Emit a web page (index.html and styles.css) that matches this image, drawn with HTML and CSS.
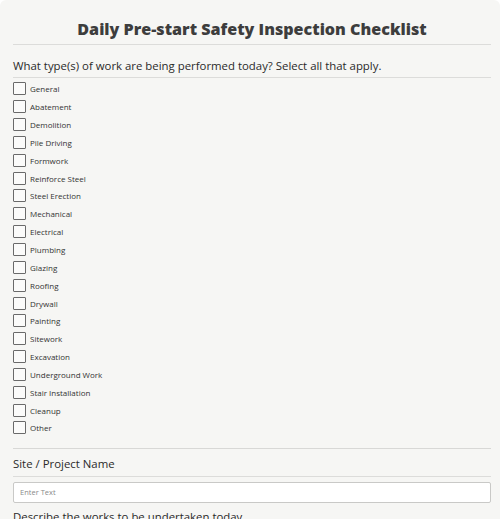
FILE: index.html
```html
<!DOCTYPE html>
<html>
<head>
<meta charset="utf-8">
<link rel="stylesheet" href="styles.css">
</head>
<body>
<div class="page">
  <h1 class="title">Daily Pre-start Safety Inspection Checklist</h1>
  <div class="section">
    <div class="question">What type(s) of work are being performed today? Select all that apply.</div>
    <div class="options">
      <label class="opt"><span class="box"></span>General</label>
      <label class="opt"><span class="box"></span>Abatement</label>
      <label class="opt"><span class="box"></span>Demolition</label>
      <label class="opt"><span class="box"></span>Pile Driving</label>
      <label class="opt"><span class="box"></span>Formwork</label>
      <label class="opt"><span class="box"></span>Reinforce Steel</label>
      <label class="opt"><span class="box"></span>Steel Erection</label>
      <label class="opt"><span class="box"></span>Mechanical</label>
      <label class="opt"><span class="box"></span>Electrical</label>
      <label class="opt"><span class="box"></span>Plumbing</label>
      <label class="opt"><span class="box"></span>Glazing</label>
      <label class="opt"><span class="box"></span>Roofing</label>
      <label class="opt"><span class="box"></span>Drywall</label>
      <label class="opt"><span class="box"></span>Painting</label>
      <label class="opt"><span class="box"></span>Sitework</label>
      <label class="opt"><span class="box"></span>Excavation</label>
      <label class="opt"><span class="box"></span>Underground Work</label>
      <label class="opt"><span class="box"></span>Stair Installation</label>
      <label class="opt"><span class="box"></span>Cleanup</label>
      <label class="opt"><span class="box"></span>Other</label>
    </div>
  </div>
  <div class="section top">
    <div class="question second">Site / Project Name</div>
    <div class="input">Enter Text</div>
  </div>
  <div class="section last">
    <div class="question plain">Describe the works to be undertaken today</div>
  </div>
</div>
</body>
</html>
```
FILE: styles.css
```css
html, body {
  margin: 0;
  padding: 0;
  background: #ffffff;
}
body {
  font-family: "Open Sans", "Liberation Sans", sans-serif;
  color: #333333;
  overflow: hidden;
}
.page {
  background: #f6f6f4;
  border-radius: 6px 6px 0 0;
  height: 519px;
  padding: 0 9px 0 13px;
  box-sizing: border-box;
}
.title {
  margin: 0;
  padding-top: 18px;
  height: 26px;
  border-bottom: 1px solid #dcdcda;
  font-size: 16.1px;
  line-height: 22px;
  font-weight: 800;
  text-align: center;
  color: #3d3d3d;
}
.question {
  font-size: 11.4px;
  line-height: 14px;
  padding: 14px 0 4px;
  border-bottom: 1px solid #dcdcda;
  color: #2a2a2a;
}
.question.second {
  padding: 8px 0 5px;
}
.options {
  display: flex;
  flex-direction: column;
  padding: 2px 0 11px;
}
.opt {
  display: flex;
  align-items: center;
  gap: 4px;
  height: 17.85px;
  font-size: 8px;
  color: #333;
}
.box {
  width: 11px;
  height: 11px;
  border: 1px solid #6a6a6a;
  border-radius: 1px;
  background: #fbfbfa;
}
.section.top {
  border-top: 1px solid #d8d8d6;
}
.input {
  margin-top: 5px;
  height: 19px;
  border: 1px solid #c9c9c7;
  border-radius: 2px;
  background: #ffffff;
  font-size: 7.5px;
  color: #8a8a8a;
  display: flex;
  align-items: center;
  padding-left: 6px;
}
.question.plain {
  border-bottom: none;
  padding-top: 7px;
}
```
